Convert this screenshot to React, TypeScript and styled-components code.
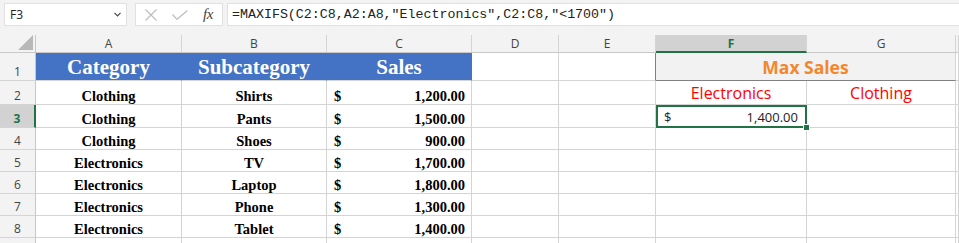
import { Fragment } from "react";
import styled, { createGlobalStyle, css } from "styled-components";

const GlobalStyle = createGlobalStyle`
  html, body {
    margin: 0;
    padding: 0;
    background: #fff;
  }
  body {
    font-family: "Open Sans", "Noto Sans", sans-serif;
    overflow: hidden;
  }
`;

const green = "#217346";
const grid = "#d4d4d4";
const headLine = "#c8c8c8";

const Window = styled.div`
  width: 959px;
  height: 243px;
  display: flex;
  flex-direction: column;
  overflow: hidden;
`;

const FormulaBar = styled.div`
  flex: none;
  height: 35px;
  box-sizing: border-box;
  background: #f3f3f3;
  display: flex;
  align-items: flex-start;
  padding: 3px 0 0 4px;
`;

const NameBox = styled.div`
  flex: none;
  width: 123px;
  height: 23px;
  box-sizing: border-box;
  margin-right: 8px;
  padding: 0 5px;
  background: #fff;
  border: 1px solid #e1e1e1;
  display: flex;
  align-items: center;
  justify-content: space-between;
  font-size: 12px;
  color: #222;
`;

const IconBox = styled.div`
  flex: none;
  width: 88px;
  height: 23px;
  box-sizing: border-box;
  margin-right: 4px;
  padding-left: 9px;
  background: #fff;
  border: 1px solid #e1e1e1;
  display: flex;
  align-items: center;
  gap: 15px;
`;

const Fx = styled.span`
  font-family: "Liberation Serif", serif;
  font-style: italic;
  font-size: 15px;
  color: #444;
  letter-spacing: -0.5px;
`;

const FormulaInput = styled.div`
  flex: 1;
  height: 23px;
  box-sizing: border-box;
  padding-left: 4px;
  background: #fff;
  border: 1px solid #e1e1e1;
  border-right: none;
  display: flex;
  align-items: center;
  font-family: "Liberation Mono", "DejaVu Sans Mono", monospace;
  font-size: 13.3px;
  color: #222;
  white-space: nowrap;
`;

const Sheet = styled.div`
  display: grid;
  grid-template-columns: 36px 146px 145px 145px 87px 97px 151px 149px 1fr;
  grid-template-rows: 18px 28px 24px 23px repeat(6, 22px);
`;

const base = css`
  box-sizing: border-box;
  border-right: 1px solid ${grid};
  border-bottom: 1px solid ${grid};
  display: flex;
  min-width: 0;
  overflow: hidden;
  white-space: nowrap;
`;

const Corner = styled.div`
  ${base};
  position: relative;
  background: #f3f3f3;
  border-right-color: ${headLine};
  border-bottom-color: ${headLine};

  &::after {
    content: "";
    position: absolute;
    right: 2px;
    bottom: 2px;
    width: 15px;
    height: 15px;
    background: #b8b8b8;
    clip-path: polygon(100% 0, 100% 100%, 0 100%);
  }
`;

const ColHead = styled.div<{ $active?: boolean }>`
  ${base};
  justify-content: center;
  align-items: center;
  background: ${(p) => (p.$active ? "#d2d2d2" : "#f3f3f3")};
  border-bottom: ${(p) => (p.$active ? `2px solid ${green}` : `1px solid ${headLine}`)};
  color: ${(p) => (p.$active ? green : "#444")};
  font-weight: ${(p) => (p.$active ? 700 : 400)};
  font-size: 12px;
`;

const RowHead = styled.div<{ $active?: boolean }>`
  ${base};
  justify-content: center;
  align-items: flex-end;
  background: ${(p) => (p.$active ? "#d2d2d2" : "#f3f3f3")};
  border-right: ${(p) => (p.$active ? `2px solid ${green}` : `1px solid ${headLine}`)};
  color: ${(p) => (p.$active ? green : "#444")};
  font-weight: ${(p) => (p.$active ? 700 : 400)};
  font-size: 12px;
`;

const TitleCell = styled.div`
  ${base};
  justify-content: center;
  align-items: flex-end;
  background: #4472c4;
  border-right-color: #4472c4;
  color: #fff;
  font-family: "Liberation Serif", serif;
  font-weight: 700;
  font-size: 21px;
`;

const DataCell = styled.div`
  ${base};
  justify-content: center;
  align-items: flex-end;
  color: #000;
  font-family: "Liberation Serif", serif;
  font-weight: 700;
  font-size: 14.5px;
  line-height: 16px;
`;

const MoneyCell = styled.div`
  ${base};
  justify-content: space-between;
  align-items: flex-end;
  padding: 0 6px 0 7px;
  color: #000;
  font-family: "Liberation Serif", serif;
  font-weight: 700;
  font-size: 14.5px;
  line-height: 16px;
`;

const Blank = styled.div<{ $edge?: boolean }>`
  ${base};
  ${(p) => p.$edge && "border-right: 1px solid #808080;"}
`;

const MergedTitle = styled.div`
  ${base};
  grid-column: span 2;
  justify-content: center;
  align-items: center;
  background: #f2f2f2;
  border-bottom: 1px solid #808080;
  color: #f4862c;
  font-weight: 700;
  font-size: 17.5px;
`;

const LabelCell = styled.div`
  ${base};
  justify-content: center;
  align-items: flex-end;
  color: #ff0000;
  font-size: 16px;
  line-height: 1.3;
`;

const ActiveCell = styled.div`
  ${base};
  position: relative;
  overflow: visible;
  justify-content: space-between;
  align-items: flex-end;
  padding: 0 8px 1px 8px;
  color: #222;
  font-size: 13px;
`;

const Selection = styled.div`
  position: absolute;
  left: 0;
  top: 0;
  right: -1px;
  bottom: -1px;
  border: 2px solid ${green};
  pointer-events: none;
`;

const FillHandle = styled.div`
  position: absolute;
  right: -4px;
  bottom: -4px;
  width: 5px;
  height: 5px;
  background: ${green};
  border: 1px solid #fff;
`;

const rows = [
  ["Clothing", "Shirts", "1,200.00"],
  ["Clothing", "Pants", "1,500.00"],
  ["Clothing", "Shoes", "900.00"],
  ["Electronics", "TV", "1,700.00"],
  ["Electronics", "Laptop", "1,800.00"],
  ["Electronics", "Phone", "1,300.00"],
  ["Electronics", "Tablet", "1,400.00"],
];

const columns = ["A", "B", "C", "D", "E", "F", "G"];

function CancelIcon() {
  return (
    <svg width="12" height="12" viewBox="0 0 12 12">
      <path d="M0.5 0.5 L11.5 11.5 M11.5 0.5 L0.5 11.5" stroke="#bdbdbd" strokeWidth="1.2" fill="none" />
    </svg>
  );
}

function CheckIcon() {
  return (
    <svg width="16" height="10" viewBox="0 0 16 10">
      <path d="M0.5 4.5 L5 9.3 L15.5 0.5" stroke="#bdbdbd" strokeWidth="1.2" fill="none" />
    </svg>
  );
}

function Chevron() {
  return (
    <svg width="7" height="5" viewBox="0 0 7 5">
      <path d="M0.5 0.8 L3.5 3.8 L6.5 0.8" stroke="#444" strokeWidth="1.2" fill="none" />
    </svg>
  );
}

function SummaryCells({ rowNum }: { rowNum: number }) {
  if (rowNum === 2) {
    return (
      <>
        <LabelCell>Electronics</LabelCell>
        <LabelCell>Clothing</LabelCell>
      </>
    );
  }
  if (rowNum === 3) {
    return (
      <>
        <ActiveCell>
          <span>$</span>
          <span>1,400.00</span>
          <Selection />
          <FillHandle />
        </ActiveCell>
        <Blank />
      </>
    );
  }
  return (
    <>
      <Blank />
      <Blank />
    </>
  );
}

export default function App() {
  return (
    <Window>
      <GlobalStyle />
      <FormulaBar>
        <NameBox>
          <span>F3</span>
          <Chevron />
        </NameBox>
        <IconBox>
          <CancelIcon />
          <CheckIcon />
          <Fx>fx</Fx>
        </IconBox>
        <FormulaInput>=MAXIFS(C2:C8,A2:A8,"Electronics",C2:C8,"&lt;1700")</FormulaInput>
      </FormulaBar>

      <Sheet>
        <Corner />
        {columns.map((c) => (
          <ColHead key={c} $active={c === "F"}>
            {c}
          </ColHead>
        ))}
        <ColHead />

        <RowHead>1</RowHead>
        <TitleCell>Category</TitleCell>
        <TitleCell>Subcategory</TitleCell>
        <TitleCell>Sales</TitleCell>
        <Blank />
        <Blank $edge />
        <MergedTitle>Max Sales</MergedTitle>
        <Blank />

        {rows.map(([cat, sub, amount], i) => {
          const rowNum = i + 2;
          return (
            <Fragment key={rowNum}>
              <RowHead $active={rowNum === 3}>{rowNum}</RowHead>
              <DataCell>{cat}</DataCell>
              <DataCell>{sub}</DataCell>
              <MoneyCell>
                <span>$</span>
                <span>{amount}</span>
              </MoneyCell>
              <Blank />
              <Blank />
              <SummaryCells rowNum={rowNum} />
              <Blank />
            </Fragment>
          );
        })}

        {/* row 9 is only a sliver at the bottom edge */}
        <RowHead />
        {columns.map((c) => (
          <Blank key={`9${c}`} />
        ))}
        <Blank />
      </Sheet>
    </Window>
  );
}
